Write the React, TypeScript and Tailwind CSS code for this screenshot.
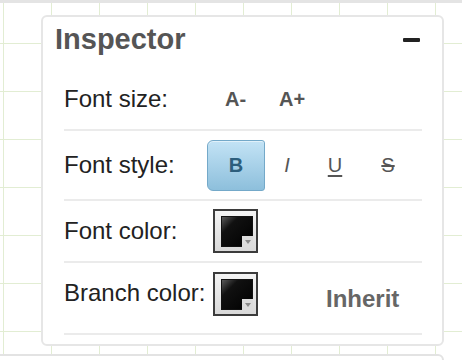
import React from "react";

function Swatch({ className = "" }: { className?: string }) {
  return (
    <div
      className={`w-[45px] h-[44px] shrink-0 border-2 border-[#3c3c3c] bg-[linear-gradient(to_bottom,#f4f4f4,#d9d9d9)] pt-[5px] pl-[6px] pr-[3px] pb-[4px] ${className}`}
    >
      <div className="relative w-full h-full border border-[#111] bg-[linear-gradient(135deg,#5a5a5a_0%,#111_28%,#000_100%)]">
        <div className="absolute right-[-1px] bottom-[-1px] w-[11px] h-[11px] bg-[#dcdcdc] flex items-center justify-center">
          <svg width="6" height="4" viewBox="0 0 6 4">
            <path d="M0 0 L6 0 L3 4 Z" fill="#8a8a8a" />
          </svg>
        </div>
      </div>
    </div>
  );
}

export default function App() {
  return (
    <div className="relative w-[462px] h-[360px] overflow-hidden bg-white bg-[linear-gradient(to_right,#e2edd3_1px,transparent_1px),linear-gradient(to_bottom,#e2edd3_1px,transparent_1px)] bg-[size:48px_48px] bg-[position:3px_43px] font-['Liberation_Sans',Arial,sans-serif]">
      <div className="h-[3px] bg-[#e4e4e4]" />

      <div className="ml-[41px] mt-[12px] w-[403px] h-[331px] border-2 border-[#e6e6e6] rounded-[6px] bg-white">
        <div className="flex items-start justify-between h-[51px] pl-[12px] pr-[22px] pt-[5px]">
          <span className="text-[29px] leading-[34px] font-bold text-[#555]">Inspector</span>
          <div className="mt-[16px] w-[17px] h-[4px] rounded-[1px] bg-[#222]" />
        </div>

        <div className="pl-[21px] pr-[20px] text-[#222]">
          <div className="flex items-center h-[63px] border-b-2 border-[#ebebeb]">
            <span className="w-[143px] shrink-0 text-[24px] leading-[28px]">Font size:</span>
            <span className="ml-[18px] text-[20px] leading-[24px] font-bold text-[#555]">A-</span>
            <span className="ml-[33px] text-[20px] leading-[24px] font-bold text-[#555]">A+</span>
          </div>

          <div className="flex items-center h-[70px] border-b-2 border-[#ebebeb]">
            <span className="w-[143px] shrink-0 text-[24px] leading-[28px]">Font style:</span>
            <div className="flex items-center h-[51px]">
              <div className="w-[58px] h-[51px] flex items-center justify-center rounded-l-[6px] rounded-r-[3px] border border-[#74a9c9] bg-[linear-gradient(to_bottom,#c3e3f5,#8dbfdc)] shadow-[inset_0_1px_0_rgba(255,255,255,0.5)] text-[20px] font-bold text-[#2d5e7c]">
                B
              </div>
              <div className="w-[44px] h-[51px] flex items-center justify-center text-[20px] italic text-[#555]">I</div>
              <div className="w-[52px] h-[51px] flex items-center justify-center text-[20px] underline underline-offset-[3px] text-[#555]">U</div>
              <div className="w-[54px] h-[51px] flex items-center justify-center text-[20px] line-through text-[#555]">S</div>
            </div>
          </div>

          <div className="flex items-center h-[62px] border-b-2 border-[#ebebeb]">
            <span className="w-[143px] shrink-0 text-[24px] leading-[28px]">Font color:</span>
            <Swatch className="ml-[6px]" />
          </div>

          <div className="flex items-start h-[72px] border-b-2 border-[#ebebeb]">
            <span className="w-[143px] shrink-0 mt-[16px] text-[24px] leading-[28px]">Branch color:</span>
            <Swatch className="ml-[6px] mt-[9px]" />
            <span className="ml-[68px] mt-[22px] text-[24px] leading-[28px] font-bold text-[#666]">Inherit</span>
          </div>
        </div>
      </div>

      <div className="ml-[-10px] mt-[8px] w-[454px] h-[30px] border-2 border-[#e3e3e3] rounded-[6px] bg-white" />
    </div>
  );
}
